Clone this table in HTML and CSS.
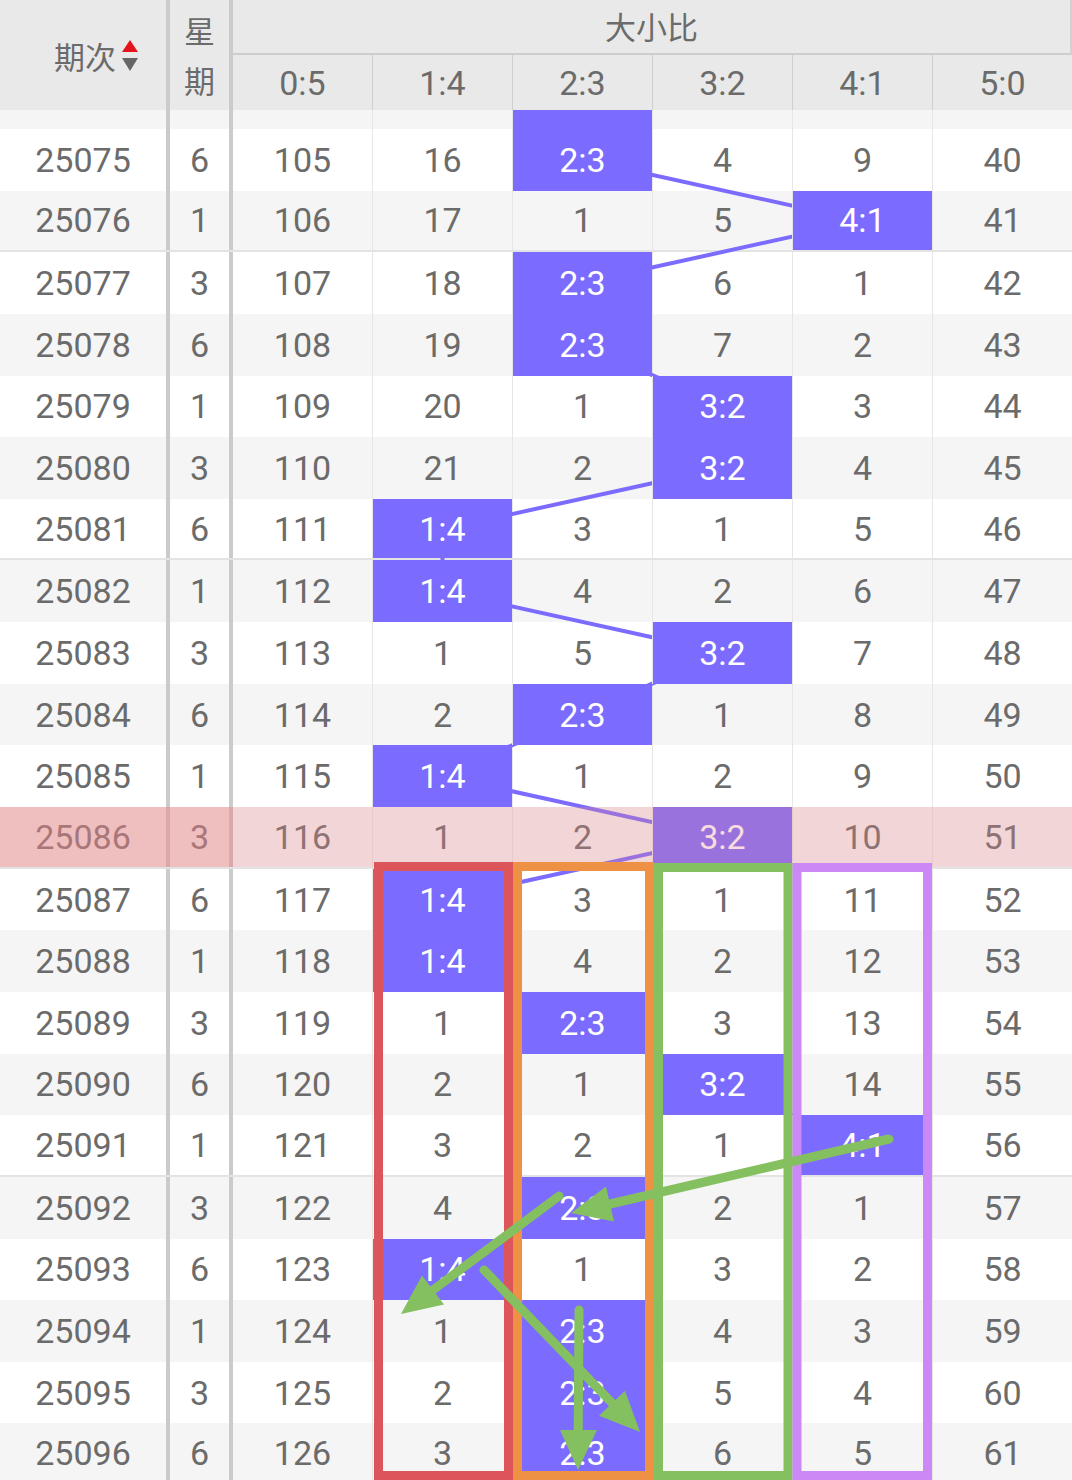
FILE: index.html
```html
<!DOCTYPE html>
<html lang="zh">
<head>
<meta charset="utf-8">
<title>大小比走势</title>
<link rel="stylesheet" href="styles.css">
</head>
<body>
<div class="page">
  <div class="thead">
    <div class="h-issue"><span>期次</span><svg class="sort" width="16" height="31" viewBox="0 0 16 31"><polygon points="8,0 16,12 0,12" fill="#e5141c"/><polygon points="0,18 16,18 8,31" fill="#666"/></svg></div>
    <div class="h-week"><span>星</span><span>期</span></div>
    <div class="h-group">
      <div class="h-title">大小比</div>
      <div class="h-cols"><div>0:5</div><div>1:4</div><div>2:3</div><div>3:2</div><div>4:1</div><div>5:0</div></div>
    </div>
  </div>
  <div class="tbody">
    <div class="rows">
      <svg class="links" width="1072" height="1418" viewBox="0 0 1072 1418"><polyline points="582.5,30.8 582.5,92.5 862.5,154.1 582.5,215.8 582.5,277.4 722.5,339.1 722.5,400.7 442.5,462.4 442.5,524 722.5,585.7 582.5,647.3 442.5,709 722.5,770.6 442.5,832.3 442.5,893.9 582.5,955.6 722.5,1017.2 862.5,1078.9 582.5,1140.5 442.5,1202.2 582.5,1263.8 582.5,1325.5 582.5,1387.1" fill="none" stroke="#7b6bff" stroke-width="4" stroke-linejoin="round"/></svg>
      <div class="r alt"><div class="c0">25074</div><div class="c1">3</div><div class="c">104</div><div class="c">15</div><div class="c hl">2:3</div><div class="c">3</div><div class="c">8</div><div class="c">39</div></div>
      <div class="r"><div class="c0">25075</div><div class="c1">6</div><div class="c">105</div><div class="c">16</div><div class="c hl">2:3</div><div class="c">4</div><div class="c">9</div><div class="c">40</div></div>
      <div class="r alt sep"><div class="c0">25076</div><div class="c1">1</div><div class="c">106</div><div class="c">17</div><div class="c">1</div><div class="c">5</div><div class="c hl">4:1</div><div class="c">41</div></div>
      <div class="r"><div class="c0">25077</div><div class="c1">3</div><div class="c">107</div><div class="c">18</div><div class="c hl">2:3</div><div class="c">6</div><div class="c">1</div><div class="c">42</div></div>
      <div class="r alt"><div class="c0">25078</div><div class="c1">6</div><div class="c">108</div><div class="c">19</div><div class="c hl">2:3</div><div class="c">7</div><div class="c">2</div><div class="c">43</div></div>
      <div class="r"><div class="c0">25079</div><div class="c1">1</div><div class="c">109</div><div class="c">20</div><div class="c">1</div><div class="c hl">3:2</div><div class="c">3</div><div class="c">44</div></div>
      <div class="r alt"><div class="c0">25080</div><div class="c1">3</div><div class="c">110</div><div class="c">21</div><div class="c">2</div><div class="c hl">3:2</div><div class="c">4</div><div class="c">45</div></div>
      <div class="r sep"><div class="c0">25081</div><div class="c1">6</div><div class="c">111</div><div class="c hl">1:4</div><div class="c">3</div><div class="c">1</div><div class="c">5</div><div class="c">46</div></div>
      <div class="r alt"><div class="c0">25082</div><div class="c1">1</div><div class="c">112</div><div class="c hl">1:4</div><div class="c">4</div><div class="c">2</div><div class="c">6</div><div class="c">47</div></div>
      <div class="r"><div class="c0">25083</div><div class="c1">3</div><div class="c">113</div><div class="c">1</div><div class="c">5</div><div class="c hl">3:2</div><div class="c">7</div><div class="c">48</div></div>
      <div class="r alt"><div class="c0">25084</div><div class="c1">6</div><div class="c">114</div><div class="c">2</div><div class="c hl">2:3</div><div class="c">1</div><div class="c">8</div><div class="c">49</div></div>
      <div class="r"><div class="c0">25085</div><div class="c1">1</div><div class="c">115</div><div class="c hl">1:4</div><div class="c">1</div><div class="c">2</div><div class="c">9</div><div class="c">50</div></div>
      <div class="r alt sep pink"><div class="c0">25086</div><div class="c1">3</div><div class="c">116</div><div class="c">1</div><div class="c">2</div><div class="c hl">3:2</div><div class="c">10</div><div class="c">51</div></div>
      <div class="r"><div class="c0">25087</div><div class="c1">6</div><div class="c">117</div><div class="c hl">1:4</div><div class="c">3</div><div class="c">1</div><div class="c">11</div><div class="c">52</div></div>
      <div class="r alt"><div class="c0">25088</div><div class="c1">1</div><div class="c">118</div><div class="c hl">1:4</div><div class="c">4</div><div class="c">2</div><div class="c">12</div><div class="c">53</div></div>
      <div class="r"><div class="c0">25089</div><div class="c1">3</div><div class="c">119</div><div class="c">1</div><div class="c hl">2:3</div><div class="c">3</div><div class="c">13</div><div class="c">54</div></div>
      <div class="r alt"><div class="c0">25090</div><div class="c1">6</div><div class="c">120</div><div class="c">2</div><div class="c">1</div><div class="c hl">3:2</div><div class="c">14</div><div class="c">55</div></div>
      <div class="r sep"><div class="c0">25091</div><div class="c1">1</div><div class="c">121</div><div class="c">3</div><div class="c">2</div><div class="c">1</div><div class="c hl">4:1</div><div class="c">56</div></div>
      <div class="r alt"><div class="c0">25092</div><div class="c1">3</div><div class="c">122</div><div class="c">4</div><div class="c hl">2:3</div><div class="c">2</div><div class="c">1</div><div class="c">57</div></div>
      <div class="r"><div class="c0">25093</div><div class="c1">6</div><div class="c">123</div><div class="c hl">1:4</div><div class="c">1</div><div class="c">3</div><div class="c">2</div><div class="c">58</div></div>
      <div class="r alt"><div class="c0">25094</div><div class="c1">1</div><div class="c">124</div><div class="c">1</div><div class="c hl">2:3</div><div class="c">4</div><div class="c">3</div><div class="c">59</div></div>
      <div class="r"><div class="c0">25095</div><div class="c1">3</div><div class="c">125</div><div class="c">2</div><div class="c hl">2:3</div><div class="c">5</div><div class="c">4</div><div class="c">60</div></div>
      <div class="r alt sep"><div class="c0">25096</div><div class="c1">6</div><div class="c">126</div><div class="c">3</div><div class="c hl">2:3</div><div class="c">6</div><div class="c">5</div><div class="c">61</div></div>
    </div>
  </div>
  <svg class="marks" width="1072" height="1480" viewBox="0 0 1072 1480">
    <g fill="none" stroke-width="9">
      <rect x="378.5" y="866.5" width="130" height="609" stroke="#db555a"/>
      <rect x="517.5" y="866.5" width="132" height="609" stroke="#ee9145"/>
      <rect x="658.5" y="867.5" width="129.5" height="608" stroke="#84c060"/>
      <rect x="797" y="867.5" width="130.5" height="608" stroke="#cc88f4"/>
    </g>
    <g stroke="#84c060" stroke-width="9" stroke-linecap="round" fill="none">
      <line x1="889" y1="1139" x2="610" y2="1204"/>
      <line x1="559" y1="1196" x2="433" y2="1290"/>
      <line x1="484" y1="1270" x2="612" y2="1403"/>
      <line x1="579" y1="1310" x2="578.2" y2="1430"/>
    </g>
    <g fill="#84c060">
      <polygon points="571,1213 614,1221.5 606,1186.5"/>
      <polygon points="401,1314 444,1304.4 422,1275.6"/>
      <polygon points="640,1432 599,1415.7 625,1390.7"/>
      <polygon points="578,1470 560,1430 597,1430"/>
    </g>
  </svg>
</div>
</body>
</html>
```
FILE: styles.css
```css
* { box-sizing: border-box; }
html, body { margin: 0; padding: 0; background: #fff; }

.page {
  position: relative;
  width: 1072px;
  height: 1480px;
  overflow: hidden;
  display: flex;
  flex-direction: column;
  font-family: Roboto, "Noto Sans CJK SC", sans-serif;
  color: #6b6b6b;
}

/* header */
.thead {
  flex: none;
  height: 110px;
  display: flex;
  background: #e9e9e9;
  font-family: "Noto Sans CJK SC", Roboto, sans-serif;
}
.h-issue {
  width: 170px;
  border-right: 4px solid #cbcbcb;
  display: flex;
  align-items: center;
  justify-content: center;
  gap: 6px;
  padding-left: 26px;
  font-size: 31px;
}
.sort { display: block; }
.h-week {
  width: 63px;
  border-right: 4px solid #cbcbcb;
  display: flex;
  flex-direction: column;
  align-items: center;
  justify-content: center;
  font-size: 31px;
  line-height: 50px;
}
.h-group {
  flex: 1;
  display: flex;
  flex-direction: column;
}
.h-title {
  height: 55px;
  padding-bottom: 3px;
  border-bottom: 2px solid #cdcdcd;
  border-right: 2px solid #d2d2d2;
  display: flex;
  align-items: center;
  justify-content: center;
  font-size: 31px;
}
.h-cols { flex: 1; display: flex; }
.h-cols > div {
  width: 140px;
  border-left: 1px solid #cfcfcf;
  display: flex;
  align-items: center;
  justify-content: center;
  font-family: Roboto, sans-serif;
  font-size: 34px;
}
.h-cols > div:first-child { width: 139px; border-left: none; }

/* body */
.tbody { flex: 1; overflow: hidden; }
.rows {
  position: relative;
  z-index: 0;
  margin-top: -42.65px;
}
.links {
  position: absolute;
  top: 0;
  left: 0;
  z-index: 1;
  pointer-events: none;
}
.r {
  height: 61.65px;
  display: flex;
  background: #fff;
  font-size: 34px;
  line-height: 1;
}
.r.alt { background: #f5f5f5; }
.r.sep { border-bottom: 2px solid #e3e3e3; }
.r > div {
  display: flex;
  align-items: center;
  justify-content: center;
}
.c0 { width: 170px; border-right: 4px solid #cbcbcb; }
.c1 { width: 63px; border-right: 4px solid #cbcbcb; }
.c {
  width: 140px;
  border-left: 1px solid #e6e6e6;
  background-clip: padding-box;
}
.r > .c:nth-child(3) { width: 139px; border-left: none; }
.hl {
  background-color: #7b6bff;
  color: #fff;
  position: relative;
  z-index: 2;
}

/* highlighted (current) row */
.r.pink { position: relative; }
.r.pink::after {
  content: "";
  position: absolute;
  top: 0; left: 0; right: 0; bottom: 0;
  background: rgba(234, 132, 136, 0.285);
  z-index: 3;
}
.r.pink .c0, .r.pink .c1 { position: relative; }
.r.pink .c0::after, .r.pink .c1::after {
  content: "";
  position: absolute;
  top: 0; left: 0; right: -4px; bottom: 0;
  background: rgba(234, 132, 136, 0.285);
  z-index: 3;
}

/* annotations */
.marks {
  position: absolute;
  top: 0;
  left: 0;
  z-index: 10;
  pointer-events: none;
}
```
